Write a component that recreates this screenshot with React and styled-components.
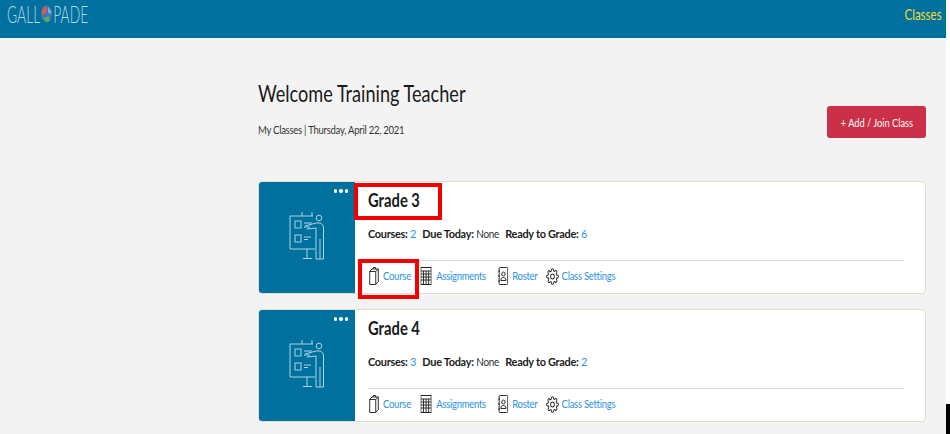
import React from 'react';
import styled, { createGlobalStyle } from 'styled-components';

const CLASSES = [
  { name: 'Grade 3', courses: 2, due: 'None', ready: 6 },
  { name: 'Grade 4', courses: 3, due: 'None', ready: 2 },
];

const Global = createGlobalStyle`
  html, body { margin: 0; padding: 0; background: #fff; }
  body { font-family: Lato, "Open Sans", sans-serif; color: #1c1c1c; overflow: hidden; }
`;

const Screen = styled.div`
  position: relative;
  width: 950px;
  height: 434px;
  overflow: hidden;
`;

const Page = styled.div`
  width: 946px;
  height: 434px;
  background: #f3f3f3;
  overflow: hidden;
`;

const TopBar = styled.header`
  height: 38px;
  background: #00709f;
  display: flex;
  align-items: flex-start;
  justify-content: space-between;
  padding: 0 4px 0 7px;
`;

const Logo = styled.div`
  display: flex;
  align-items: center;
  height: 28px;
  font-size: 23px;
  font-weight: 300;
  color: #bcd8e4;
  transform: scaleX(0.6);
  transform-origin: left center;
`;

const Globe = styled.svg`
  width: 20px;
  height: 18px;
  margin: 0 1px;
`;

const TopLink = styled.a`
  font-size: 16px;
  line-height: 27px;
  color: #f2dc2c;
  transform: scaleX(0.72);
  transform-origin: right center;
`;

const Main = styled.main`
  padding: 41px 20px 0 258px;
`;

const Hero = styled.section`
  display: flex;
  justify-content: space-between;
  align-items: flex-start;
  height: 102px;
`;

const Title = styled.h1`
  margin: 0;
  font-size: 24px;
  line-height: 27px;
  font-weight: 400;
  white-space: nowrap;
  color: #1a1a1a;
  transform: scaleX(0.755);
  transform-origin: left center;
`;

const Subtitle = styled.p`
  margin: 17px 0 0;
  font-size: 11.5px;
  line-height: 14px;
  letter-spacing: -0.3px;
  white-space: nowrap;
  color: #333;
  transform: scaleX(0.825);
  transform-origin: left center;
`;

const AddButton = styled.button`
  margin-top: 27px;
  width: 99px;
  height: 32px;
  padding: 0;
  border: 0;
  border-radius: 3px;
  background: #cc3048;
  color: #fff;
  font: 400 12px Lato, sans-serif;
  white-space: nowrap;
  span { display: inline-block; transform: scaleX(0.77); }
`;

const Card = styled.article`
  display: flex;
  height: 113px;
  margin-bottom: 15px;
  background: #fff;
  border: 1px solid #e0e0ca;
  border-radius: 4px;
  box-sizing: border-box;
  overflow: hidden;
`;

const Thumb = styled.div`
  position: relative;
  flex: 0 0 96px;
  display: flex;
  align-items: center;
  justify-content: center;
  padding-bottom: 3px;
  box-sizing: border-box;
  background: #00709f;
`;

const Dots = styled.div`
  position: absolute;
  top: 7px;
  right: 7px;
  display: flex;
  gap: 2px;
  i {
    width: 3.5px;
    height: 3.5px;
    border-radius: 50%;
    background: #fff;
  }
`;

const Body = styled.div`
  flex: 1;
  min-width: 0;
  padding: 6px 21px 0 13px;
`;

const CardTitle = styled.h2`
  margin: 0;
  font-size: 18px;
  line-height: 24px;
  font-weight: 700;
  color: #1a1a1a;
  transform: scaleX(0.82);
  transform-origin: left center;
`;

const Stats = styled.div`
  display: flex;
  gap: 6.5px;
  margin-top: 14px;
  font-size: 11.5px;
  line-height: 16px;
  letter-spacing: -0.3px;
  white-space: nowrap;
  transform: scaleX(0.95);
  transform-origin: left center;
  b { font-weight: 700; color: #222; }
  span { font-size: 10.5px; color: #333; }
  em { font-style: normal; color: #2a92e6; }
`;

const Divider = styled.div`
  margin-top: 18px;
  height: 1px;
  background: #d8d8d8;
`;

const Links = styled.nav`
  display: flex;
  align-items: center;
  padding: 6px 0 0 1px;
  white-space: nowrap;
  transform: scaleX(0.86);
  transform-origin: left center;
`;

const LinkItem = styled.a`
  display: flex;
  align-items: center;
  gap: ${p => p.$gap}px;
  margin-right: ${p => p.$after}px;
  font-size: 11px;
  line-height: 18px;
  letter-spacing: -0.3px;
  color: #2a92e6;
  svg { display: block; flex: none; }
`;

const Mark = styled.div`
  position: absolute;
  box-sizing: border-box;
  border: 4px solid #f40000;
  left: ${p => p.$x}px;
  top: ${p => p.$y}px;
  width: ${p => p.$w}px;
  height: ${p => p.$h}px;
`;

const BlackEdge = styled.div`
  position: absolute;
  left: 946px;
  top: 404px;
  width: 4px;
  height: 30px;
  background: #000;
`;

const TeacherIcon = () => (
  <svg width="36" height="50" viewBox="0 0 36 50" fill="none" stroke="#bfe0ec" strokeWidth="0.9">
    <path d="M24 5H1V38H26" />
    <path d="M13 1V5M23 1V5" />
    <path d="M18 38V47M14 47.5H23" />
    <rect x="6" y="10" width="6" height="7" />
    <rect x="6" y="24" width="6" height="7" />
    <path d="M15 12H23M15 16H21M15 26H22M15 28.5H19" />
    <circle cx="30" cy="7" r="2.8" />
    <path d="M16 15L27 12H31C34 13 34.5 15 34.5 18V48H27V17L18 18" />
    <path d="M31 28V48" />
  </svg>
);

const BookIcon = () => (
  <svg width="12" height="18" viewBox="0 0 12 18" fill="none" stroke="#222" strokeWidth="1">
    <path d="M1 4.5L3.5 2H11V14.5L8 17.5H1ZM1 4.5H8V17.5M8 4.5L11 2" />
    <path d="M5 2V0.5H8V2" />
  </svg>
);

const GridIcon = () => (
  <svg width="13" height="18" viewBox="0 0 13 18" fill="none" stroke="#222" strokeWidth="1">
    <rect x="0.5" y="0.5" width="12" height="17" />
    <path d="M0.5 4H12.5M0.5 7H12.5M0.5 10H12.5M0.5 13H12.5M3.5 4V17.5M6.5 4V17.5M9.5 4V17.5" />
  </svg>
);

const RosterIcon = () => (
  <svg width="12" height="18" viewBox="0 0 12 18" fill="none" stroke="#222" strokeWidth="1">
    <rect x="1.5" y="0.5" width="10" height="17" rx="1" />
    <circle cx="6.5" cy="7" r="2" />
    <path d="M3.5 13.5C3.5 11 5 10.5 6.5 10.5C8 10.5 9.5 11 9.5 13.5Z" />
    <path d="M0 4H2.5M0 9H2.5M0 14H2.5" />
  </svg>
);

const GearIcon = () => (
  <svg width="15" height="17" viewBox="0 0 24 24" preserveAspectRatio="none" fill="none" stroke="#222" strokeWidth="1.6">
    <circle cx="12" cy="12" r="3.5" />
    <path d="M19.4 15a1.65 1.65 0 0 0 .33 1.82l.06.06a2 2 0 1 1-2.83 2.83l-.06-.06a1.65 1.65 0 0 0-2.82 1.17V21a2 2 0 1 1-4 0v-.09a1.65 1.65 0 0 0-2.82-1.08l-.06.06a2 2 0 1 1-2.83-2.83l.06-.06A1.65 1.65 0 0 0 3.09 14H3a2 2 0 1 1 0-4h.09a1.65 1.65 0 0 0 1.08-2.82l-.06-.06a2 2 0 1 1 2.83-2.83l.06.06A1.65 1.65 0 0 0 10 3.09V3a2 2 0 1 1 4 0v.09a1.65 1.65 0 0 0 2.82 1.08l.06-.06a2 2 0 1 1 2.83 2.83l-.06.06A1.65 1.65 0 0 0 20.91 10H21a2 2 0 1 1 0 4h-.09a1.65 1.65 0 0 0-1.51 1z" />
  </svg>
);

const ClassCard = ({ item }) => (
  <Card>
    <Thumb>
      <Dots><i /><i /><i /></Dots>
      <TeacherIcon />
    </Thumb>
    <Body>
      <CardTitle>{item.name}</CardTitle>
      <Stats>
        <div><b>Courses:</b> <em>{item.courses}</em></div>
        <div><b>Due Today:</b> <span>{item.due}</span></div>
        <div><b>Ready to Grade:</b> <em>{item.ready}</em></div>
      </Stats>
      <Divider />
      <Links>
        <LinkItem $gap={4.5} $after={11}><BookIcon />Course</LinkItem>
        <LinkItem $gap={5.5} $after={14}><GridIcon />Assignments</LinkItem>
        <LinkItem $gap={4.5} $after={9.5}><RosterIcon />Roster</LinkItem>
        <LinkItem $gap={3.5} $after={0}><GearIcon />Class Settings</LinkItem>
      </Links>
    </Body>
  </Card>
);

export default function App() {
  return (
    <Screen>
      <Global />
      <Page>
        <TopBar>
          <Logo>
            GALL
            <Globe viewBox="0 0 13 19" preserveAspectRatio="none">
              <ellipse cx="6.5" cy="9.5" rx="6" ry="9" fill="#3f78b8" />
              <path d="M1 7C2 3 4 1 6 1L7 7L3 11Z" fill="#d8584f" />
              <path d="M3 14L9 12L10 17L6 18Z" fill="#55b04f" />
              <path d="M8 2L12 7L10 10L8 7Z" fill="#6fb8d8" />
            </Globe>
            PADE
          </Logo>
          <TopLink>Classes</TopLink>
        </TopBar>
        <Main>
          <Hero>
            <div>
              <Title>Welcome Training Teacher</Title>
              <Subtitle>My Classes | Thursday, April 22, 2021</Subtitle>
            </div>
            <AddButton><span>+ Add / Join Class</span></AddButton>
          </Hero>
          {CLASSES.map(item => <ClassCard key={item.name} item={item} />)}
        </Main>
      </Page>
      <Mark $x={354} $y={183} $w={88} $h={37} />
      <Mark $x={358} $y={259} $w={61} $h={40} />
      <BlackEdge />
    </Screen>
  );
}
